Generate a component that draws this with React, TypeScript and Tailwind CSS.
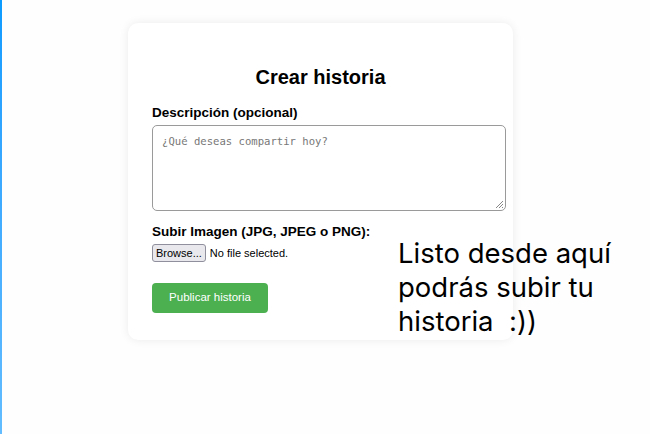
export default function App() {
  return (
    <div className="relative h-[434px] w-[650px] overflow-hidden bg-[#fefefe] font-['Liberation_Sans',Arial,sans-serif]">
      {/* left accent line */}
      <div className="absolute left-0 top-0 h-full w-[2px] bg-gradient-to-b from-[#0a9bff] to-[#62bcff]" />

      <div className="ml-[128px] pt-[23px]">
        <div className="flex h-[317px] w-[385px] flex-col rounded-[10px] bg-white pl-[24px] pt-[43px] shadow-[0_0_10px_rgba(0,0,0,0.08)]">
          <h2 className="pr-[24px] text-center text-[20px] font-bold leading-[22px] text-black">Crear historia</h2>

          <label className="mt-[17px] text-[13.5px] font-bold leading-[16px] text-black">Descripción (opcional)</label>
          <div className="relative mt-[4px] h-[86px] w-[354px] rounded-[5px] border border-[#9a9a9a] bg-white">
            <span className="absolute left-[9px] top-[8px] font-['DejaVu_Sans_Mono',monospace] text-[10.6px] text-[#777]">
              ¿Qué deseas compartir hoy?
            </span>
            <svg className="absolute bottom-[1px] right-[1px]" width="10" height="10" viewBox="0 0 10 10">
              <path d="M9 2 L2 9 M9 5 L5 9 M9 8 L8 9" stroke="#888" strokeWidth="1" />
            </svg>
          </div>

          <label className="mt-[13px] text-[13.5px] font-bold leading-[16px] text-black">Subir Imagen (JPG, JPEG o PNG):</label>
          <div className="mt-[4px] flex items-center gap-[4px]">
            <span className="flex h-[18px] items-center rounded-[3px] border border-[#8f8f9d] bg-[#e9e9ed] px-[3px] text-[11px] text-black">
              Browse...
            </span>
            <span className="text-[11px] text-black">No file selected.</span>
          </div>

          <button className="mt-[21px] h-[30px] w-[116px] rounded-[4px] bg-[#4caf50] text-[11.5px] text-white">
            Publicar historia
          </button>
        </div>
      </div>

      <div className="absolute left-[398px] top-[236px] font-['Inter',sans-serif] text-[27.5px] leading-[34px] text-black">
        <div>Listo desde aquí</div>
        <div>podrás subir tu</div>
        <div className="whitespace-pre">historia  :))</div>
      </div>
    </div>
  );
}
